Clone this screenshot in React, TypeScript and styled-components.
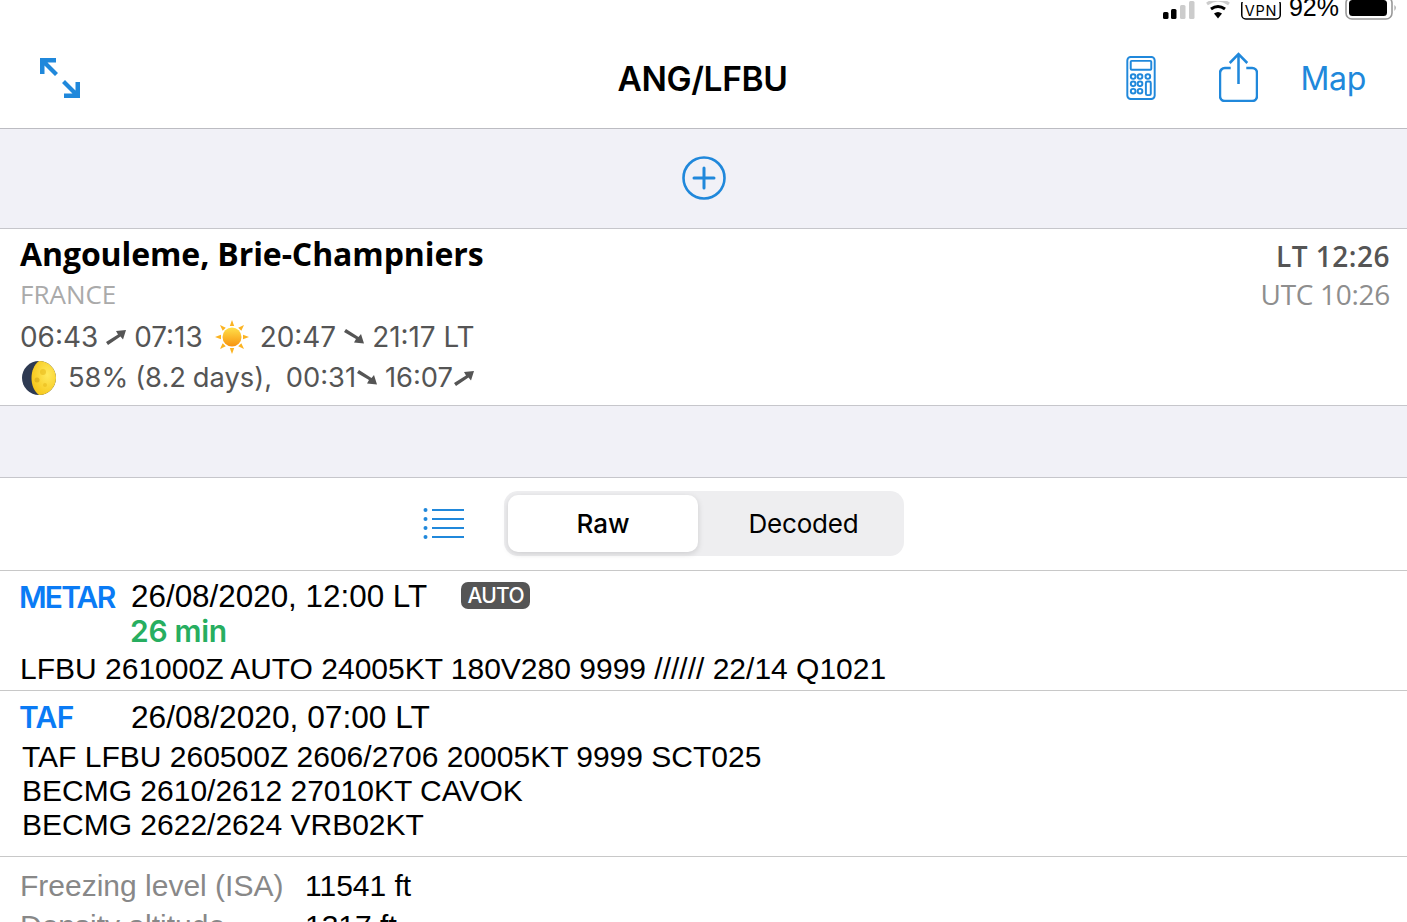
import React from "react";
import styled, { createGlobalStyle } from "styled-components";

const Global = createGlobalStyle`
  html, body { margin: 0; padding: 0; background: #fff; }
  body { font-family: "Liberation Sans", Arial, sans-serif; }
  * { box-sizing: border-box; }
`;
const BLUE = "#2088db";
const UI = `Inter, "Liberation Sans", sans-serif`;

const Page = styled.div`
  width: 1407px; height: 922px; overflow: hidden; display: flex; flex-direction: column; background: #fff;
`;
const StatusBar = styled.div`
  height: 20px; flex: none; display: flex; justify-content: flex-end; align-items: flex-end; overflow: hidden;
  padding-right: 10px;
`;
const Battery = styled.span`
  font: 400 25px/20px "Liberation Sans", sans-serif; color: #000; margin: 0 6px 0 8px; height: 20px; display: block;
  position: relative; top: -3px;
`;
const NavBar = styled.header`
  height: 109px; flex: none; display: grid; grid-template-columns: 1fr auto 1fr; align-items: center;
  border-bottom: 1px solid #bcbcc2; padding: 0 41px 0 39px;
`;
const NavLeft = styled.div`display: flex; align-items: center; margin-top: 7px;`;
const Title = styled.h1`
  margin: 10px 0 0; font: 600 33.5px/40px ${UI}; letter-spacing: -0.35px; color: #000;
`;
const NavRight = styled.div`display: flex; align-items: center; justify-content: flex-end; margin-top: 9px;`;
const MapLink = styled.span`font: 400 32px/40px ${UI}; color: ${BLUE}; letter-spacing: -0.3px; margin-left: 42px;`;
const CalcIcon = styled.svg`display: block; margin: 0 63px 2px 0;`;
const ShareIcon = styled.svg`display: block; margin-bottom: 4px;`;
const Band = styled.div<{ $h: number }>`
  height: ${p => p.$h}px; flex: none; background: #f1f1f7; border-bottom: 1px solid #c6c6cb;
  display: flex; align-items: center; justify-content: center;
`;
const Info = styled.section`
  height: 177px; flex: none; border-bottom: 1px solid #c6c6cb; padding: 3px 17px 0 20px;
  display: flex; justify-content: space-between;
`;
const InfoLeft = styled.div`display: flex; flex-direction: column;`;
const Place = styled.div`font: 700 32px/44px "Open Sans", Inter, sans-serif; color: #000; letter-spacing: -0.1px;`;
const Country = styled.div`font: 400 26px/36px "Open Sans", Inter, sans-serif; color: #aaa; margin-bottom: 5px;`;
const Line = styled.div<{ $tight?: boolean }>`
  font: 400 ${p => (p.$tight ? 27.3 : 27.9)}px/40px ${UI}; color: #555; display: flex; align-items: center; white-space: pre;
  padding-top: ${p => (p.$tight ? 1 : 0)}px; word-spacing: ${p => (p.$tight ? -0.8 : 0)}px;
`;
const Clocks = styled.div`display: flex; flex-direction: column; align-items: flex-end; padding-top: 6px;`;
const Lt = styled.div`font: 600 28px/37px "Open Sans", Inter, sans-serif; color: #555; letter-spacing: .5px;`;
const Utc = styled.div`font: 400 28px/38px "Open Sans", Inter, sans-serif; color: #8e8e8e; letter-spacing: -.3px;`;
const Toolbar = styled.div`
  height: 93px; flex: none; border-bottom: 1px solid #c8c8c8; display: flex; align-items: center; padding: 0 0 1px 423px; gap: 39px;
`;
const Segmented = styled.div`
  width: 400px; height: 65px; background: #eeeef0; border-radius: 14px; padding: 4px; display: flex;
`;
const Segment = styled.div<{ $on?: boolean }>`
  width: ${p => (p.$on ? 190 : 202)}px; border-radius: 10px; display: flex; align-items: center; justify-content: center;
  padding-left: ${p => (p.$on ? 0 : 9)}px;
  font: ${p => (p.$on ? 500 : 400)} 26px/1 ${UI}; letter-spacing: ${p => (p.$on ? 0 : -0.2)}px; color: #000;
  background: ${p => (p.$on ? "#fff" : "transparent")};
  box-shadow: ${p => (p.$on ? "0 2px 6px rgba(0,0,0,.14)" : "none")};
`;
const Report = styled.section<{ $h: number; $top: number }>`
  height: ${p => p.$h}px; flex: none; border-bottom: 1px solid #c8c8c8; padding: ${p => p.$top}px 0 0 20px;
`;
const ReportHead = styled.div`display: flex; align-items: flex-start;`;
const Kind = styled.div<{ $track: number }>`
  width: 111px; flex: none; font: 600 30px/36px ${UI}; color: #0a7bf5; letter-spacing: ${p => p.$track}px; text-indent: -1px;
`;
const Dated = styled.div<{ $size: number }>`font: 400 ${p => p.$size}px/36px "Liberation Sans", sans-serif; color: #000;`;
const Badge = styled.span`
  display: inline-block; margin-left: 34px; width: 69px; height: 27px; border-radius: 7px; background: #555; color: #fff;
  font: 500 21px/27px ${UI}; letter-spacing: -.7px; text-align: center; vertical-align: 4px;
`;
const Age = styled.div`font: 600 30px/32px ${UI}; letter-spacing: -.3px; color: #27ae60; margin: 0 0 1px 110px;`;
const Raw = styled.div<{ $inset?: number }>`
  font: 400 30px/34px "Liberation Sans", sans-serif; color: #000; margin-top: 5px; padding-left: ${p => p.$inset ?? 0}px; white-space: pre;
`;
const Facts = styled.section`
  margin: 0; padding: 9px 0 0 20px; display: grid; grid-template-columns: 285px auto; justify-content: start;
`;
const FactName = styled.div`font: 400 30px/40px "Liberation Sans", sans-serif; color: #888;`;
const FactValue = styled.div`font: 400 30px/40px "Liberation Sans", sans-serif; color: #000;`;
const Arrow = ({ up, m = 7 }: { up?: boolean; m?: number }) => (
  <svg width="22" height="18" viewBox="0 0 22 18" style={{ margin: `0 ${m}px` }}>
    {up ? <path d="M1 14 13 6.500 11 3 21 2l-3 9.500-2.500-3L3 17z" fill="#555" /> : <path d="M1 4l12 7-2 3.500 10 1-3-9.500-2.500 3L3 1z" fill="#555" />}
  </svg>
);
const Sun = () => (
  <svg width="36" height="36" viewBox="0 0 36 36" style={{ margin: "0 10px 0 11px" }}>
    <defs><linearGradient id="sg" x1="0" y1="0" x2="0" y2="1"><stop offset="0" stopColor="#ffe04a" /><stop offset="1" stopColor="#f7930f" /></linearGradient></defs>
    {Array.from({ length: 8 }).map((_, i) => (
      <path key={i} d="M18 1 L15.800 7 L20.200 7Z" fill="#fbb321" transform={`rotate(${i * 45} 18 18)`} />
    ))}
    <circle cx="18" cy="18" r="9.500" fill="url(#sg)" />
  </svg>
);
const Moon = () => (
  <svg width="36" height="36" viewBox="0 0 36 36" style={{ marginRight: 11, marginLeft: 1 }}>
    <defs><radialGradient id="mg" cx=".65" cy=".4" r=".7"><stop offset="0" stopColor="#ffe95c" /><stop offset="1" stopColor="#f6c619" /></radialGradient></defs>
    <circle cx="18" cy="18" r="17" fill="#2e3a52" />
    <path d="M18 1a17 17 0 0 1 0 34c-5-4-7.500-10-7.500-17S13 5 18 1z" fill="url(#mg)" />
    <circle cx="22" cy="12" r="3" fill="#e8bb1c" opacity=".6" /><circle cx="16" cy="20" r="2.500" fill="#d9ab1a" opacity=".7" /><circle cx="24" cy="25" r="2" fill="#e8bb1c" opacity=".6" />
  </svg>
);

export default function App() {
  return (
    <Page>
      <Global />
      <StatusBar>
        <svg width="34" height="19" viewBox="0 0 34 19" style={{ marginRight: 9 }}>
          <rect x="0" y="11" width="5.500" height="7" rx="1.500" fill="#000" />
          <rect x="8" y="8" width="5.500" height="10" rx="1.500" fill="#000" />
          <rect x="17" y="4" width="5.500" height="14" rx="1.500" fill="#ccc" />
          <rect x="26" y="0" width="5.500" height="18" rx="1.500" fill="#ccc" />
        </svg>
        <svg width="24" height="19" viewBox="0 0 24 19" style={{ marginRight: 11 }}>
          <path d="M1 3Q12-5 23 3" fill="none" stroke="#ccc" strokeWidth="3" />
          <path d="M5 8q7-5 14 0" fill="none" stroke="#000" strokeWidth="3" />
          <path d="M12 17.500l-4-5q4-3 8 0z" fill="#000" />
        </svg>
        <svg width="40" height="18" viewBox="0 0 40 18">
          <rect x=".75" y="-2" width="38.500" height="19" rx="4" fill="none" stroke="#000" strokeWidth="1.500" />
          <text x="20" y="13.500" textAnchor="middle" fontFamily="Inter, sans-serif" fontSize="14.500" letterSpacing=".8" fill="#000">VPN</text>
        </svg>
        <Battery>92%</Battery>
        <svg width="52" height="20" viewBox="0 0 52 20">
          <rect x="1" y="-3" width="46" height="22" rx="6" fill="none" stroke="#999" strokeWidth="1.600" />
          <rect x="4" y="0" width="38" height="16" rx="3.500" fill="#000" />
          <path d="M49.500 5q2.500 2.500 0 6z" fill="#999" />
        </svg>
      </StatusBar>
      <NavBar>
        <NavLeft>
          <svg width="42" height="42" viewBox="0 0 42 42">
            <path d="M1 1h16v4.500H8.500L19 16l-3 3L5.500 8.500V17H1z" fill={BLUE} />
            <path d="M41 41H25v-4.500h8.500L23 26l3-3 10.500 10.500V25H41z" fill={BLUE} />
          </svg>
        </NavLeft>
        <Title>ANG/LFBU</Title>
        <NavRight>
          <CalcIcon width="30" height="44" viewBox="0 0 30 45" fill="none" stroke={BLUE} strokeWidth="2">
            <rect x="1" y="1" width="28" height="43" rx="3.500" />
            <rect x="4.500" y="5" width="21" height="9" rx="1" />
            {[21, 28.500, 36].flatMap(y => [7, 14].map(x => <circle key={`${x}-${y}`} cx={x} cy={y} r="2.400" />))}
            <circle cx="22" cy="21" r="2.400" />
            <rect x="20" y="26" width="5" height="14" rx="1.500" />
          </CalcIcon>
          <ShareIcon width="39" height="50" viewBox="0 0 40 50" preserveAspectRatio="none" fill="none" stroke={BLUE} strokeWidth="2.600">
            <path d="M12 16H6a5 5 0 0 0-5 5v23a5 5 0 0 0 5 5h28a5 5 0 0 0 5-5V21a5 5 0 0 0-5-5h-6" />
            <path d="M20 32V2M11 11l9-9 9 9" />
          </ShareIcon>
          <MapLink>Map</MapLink>
        </NavRight>
      </NavBar>
      <Band $h={100}>
        <svg width="44" height="44" viewBox="0 0 44 44" fill="none" stroke={BLUE} strokeWidth="2.600" strokeLinecap="round" style={{ marginBottom: 2 }}>
          <circle cx="22" cy="22" r="20.500" />
          <path d="M22 12v20M12 22h20" strokeWidth="3" />
        </svg>
      </Band>
      <Info>
        <InfoLeft>
          <Place>Angouleme, Brie-Champniers</Place>
          <Country>FRANCE</Country>
          <Line>06:43<Arrow up />07:13<Sun />20:47<Arrow />21:17 LT</Line>
          <Line $tight><Moon />58% (8.2 days),  00:31<Arrow m={0} /> 16:07<Arrow up m={0} /></Line>
        </InfoLeft>
        <Clocks>
          <Lt>LT 12:26</Lt>
          <Utc>UTC 10:26</Utc>
        </Clocks>
      </Info>
      <Band $h={72} />
      <Toolbar>
        <svg width="42" height="32" viewBox="0 0 42 32">
          {[2, 11, 20, 29].map(y => (
            <g key={y}><circle cx="2.500" cy={y} r="2" fill={BLUE} /><rect x="9" y={y - 1} width="32" height="2" fill={BLUE} /></g>
          ))}
        </svg>
        <Segmented>
          <Segment $on>Raw</Segment>
          <Segment>Decoded</Segment>
        </Segmented>
      </Toolbar>
      <Report $h={120} $top={8}>
        <ReportHead>
          <Kind $track={-1.800}>METAR</Kind>
          <Dated $size={31.400}>26/08/2020, 12:00 LT<Badge>AUTO</Badge></Dated>
        </ReportHead>
        <Age>26 min</Age>
        <Raw>LFBU 261000Z AUTO 24005KT 180V280 9999 ////// 22/14 Q1021</Raw>
      </Report>
      <Report $h={166} $top={8}>
        <ReportHead>
          <Kind $track={-0.600}>TAF</Kind>
          <Dated $size={31.700}>26/08/2020, 07:00 LT</Dated>
        </ReportHead>
        <Raw $inset={2}>TAF LFBU 260500Z 2606/2706 20005KT 9999 SCT025{"\n"}BECMG 2610/2612 27010KT CAVOK{"\n"}BECMG 2622/2624 VRB02KT</Raw>
      </Report>
      <Facts>
        <FactName>Freezing level (ISA)</FactName><FactValue>11541 ft</FactValue>
        <FactName>Density altitude</FactName><FactValue>1317 ft</FactValue>
      </Facts>
    </Page>
  );
}
